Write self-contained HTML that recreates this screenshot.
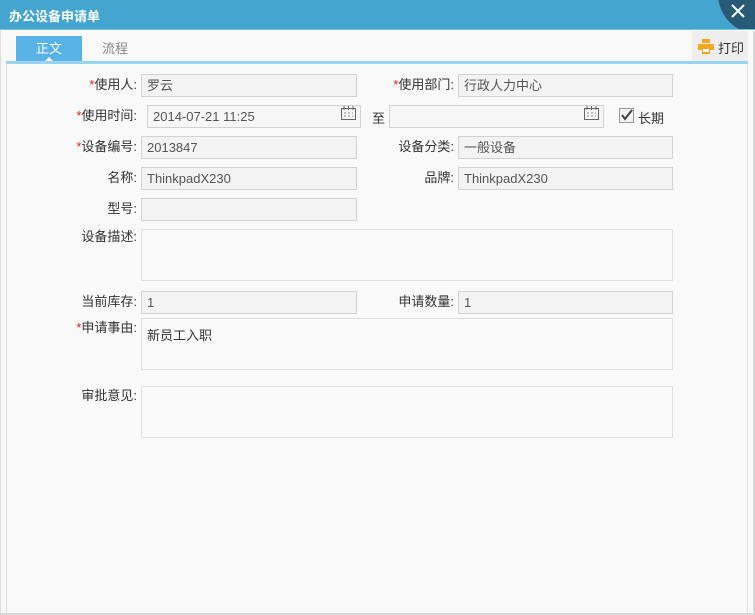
<!DOCTYPE html>
<html><head><meta charset="utf-8"><style>
*{margin:0;padding:0;box-sizing:border-box}
body{width:755px;height:615px;overflow:hidden;background:#f9f9f9;font-family:"Liberation Sans","Noto Sans CJK SC",sans-serif;font-size:13px;color:#333;position:relative}
.a{position:absolute}
.title{left:0;top:0;width:755px;height:30px;background:#45a5d1;border-bottom:1px solid #7cc0e0;overflow:hidden}
.title span{position:absolute;left:9px;top:6px;color:#fff;font-weight:bold;font-size:13px}
.close{width:80px;height:80px;border-radius:50%;background:#275a74;left:718px;top:-46px}
.inp{position:absolute;height:23px;border:1px solid #d2d2d2;background:#f3f3f3;color:#555;padding:3px 5px;font-size:13px;line-height:15px}
.ta{position:absolute;border:1px solid #dedede;background:#f9f9f9;color:#333;padding:6px 5px;font-size:13px}
.lb{position:absolute;text-align:right;width:130px;color:#333;line-height:16px}
.lb i{color:#e02020;font-style:normal}
</style></head><body>
<div class="a title"><span>办公设备申请单</span><div class="a close"></div>
<svg class="a" style="left:729px;top:2px" width="18" height="18"><path d="M3 3L15 15M15 3L3 15" stroke="#fff" stroke-width="2"/></svg></div>
<div class="a" style="left:0;top:31px;width:1px;height:584px;background:#ddd"></div>
<div class="a" style="left:753px;top:31px;width:2px;height:584px;background:#d8d8d8"></div>
<div class="a" style="left:0;top:613px;width:755px;height:2px;background:#d8d8d8"></div>
<div class="a" style="left:16px;top:36px;width:66px;height:26px;background:#58b3e6;color:#fff;text-align:center;line-height:26px">正文</div>
<div class="a" style="left:43px;top:57px;width:0;height:0;border-left:6px solid transparent;border-right:6px solid transparent;border-bottom:6px solid #fff"></div>
<div class="a" style="left:82px;top:36px;width:66px;height:26px;color:#888;text-align:center;line-height:26px">流程</div>
<div class="a" style="left:692px;top:31px;width:56px;height:30px;background:#eeeeee"></div>
<svg class="a" style="left:698px;top:39px" width="16" height="15"><rect x="4" y="0" width="8" height="4" fill="#f5a623"/><rect x="0" y="5" width="16" height="6" fill="#f5a623"/><rect x="4" y="9" width="8" height="6" fill="#f5a623"/><rect x="5" y="10" width="6" height="3" fill="#fff"/></svg>
<div class="a" style="left:718px;top:38px;color:#333">打印</div>
<div class="a" style="left:6px;top:61px;width:742px;height:3px;background:#98d3f1"></div>
<div class="a" style="left:6px;top:64px;width:742px;height:550px;border-left:1px solid #ddd;border-right:1px solid #ddd"></div>

<div class="lb" style="left:7px;top:77px"><i>*</i>使用人:</div>
<div class="inp" style="left:141px;top:74px;width:216px">罗云</div>
<div class="lb" style="left:324px;top:77px"><i>*</i>使用部门:</div>
<div class="inp" style="left:458px;top:74px;width:215px">行政人力中心</div>

<div class="lb" style="left:7px;top:108px"><i>*</i>使用时间:</div>
<div class="inp" style="left:147px;top:105px;width:214px;background:#f6f6f6">2014-07-21 11:25</div>
<svg class="a" style="left:341px;top:106px" width="15" height="14"><rect x="0.5" y="2.5" width="14" height="11" fill="none" stroke="#666"/><path d="M3 0v4M7.5 0v4M12 0v4" stroke="#666"/><path d="M3 7h2M7 7h2M11 7h1M3 10h2M7 10h2M11 10h1" stroke="#888"/></svg>
<div class="a" style="left:372px;top:108px">至</div>
<div class="inp" style="left:389px;top:105px;width:215px;background:#f6f6f6"></div>
<svg class="a" style="left:584px;top:106px" width="15" height="14"><rect x="0.5" y="2.5" width="14" height="11" fill="none" stroke="#666"/><path d="M3 0v4M7.5 0v4M12 0v4" stroke="#666"/><path d="M3 7h2M7 7h2M11 7h1M3 10h2M7 10h2M11 10h1" stroke="#888"/></svg>
<svg class="a" style="left:619px;top:108px" width="15" height="15"><rect x="0.5" y="0.5" width="14" height="14" fill="#f3f3f3" stroke="#999"/><path d="M3 7l3 4 7-9" fill="none" stroke="#444" stroke-width="2"/></svg>
<div class="a" style="left:638px;top:108px">长期</div>

<div class="lb" style="left:7px;top:139px"><i>*</i>设备编号:</div>
<div class="inp" style="left:141px;top:136px;width:216px">2013847</div>
<div class="lb" style="left:324px;top:139px">设备分类:</div>
<div class="inp" style="left:458px;top:136px;width:215px">一般设备</div>

<div class="lb" style="left:7px;top:170px">名称:</div>
<div class="inp" style="left:141px;top:167px;width:216px">ThinkpadX230</div>
<div class="lb" style="left:324px;top:170px">品牌:</div>
<div class="inp" style="left:458px;top:167px;width:215px">ThinkpadX230</div>

<div class="lb" style="left:7px;top:201px">型号:</div>
<div class="inp" style="left:141px;top:198px;width:216px"></div>

<div class="lb" style="left:7px;top:229px">设备描述:</div>
<div class="ta" style="left:141px;top:229px;width:532px;height:52px"></div>

<div class="lb" style="left:7px;top:294px">当前库存:</div>
<div class="inp" style="left:141px;top:291px;width:216px">1</div>
<div class="lb" style="left:324px;top:294px">申请数量:</div>
<div class="inp" style="left:458px;top:291px;width:215px">1</div>

<div class="lb" style="left:7px;top:320px"><i>*</i>申请事由:</div>
<div class="ta" style="left:141px;top:318px;width:532px;height:52px">新员工入职</div>

<div class="lb" style="left:7px;top:388px">审批意见:</div>
<div class="ta" style="left:141px;top:386px;width:532px;height:52px"></div>
</body></html>
